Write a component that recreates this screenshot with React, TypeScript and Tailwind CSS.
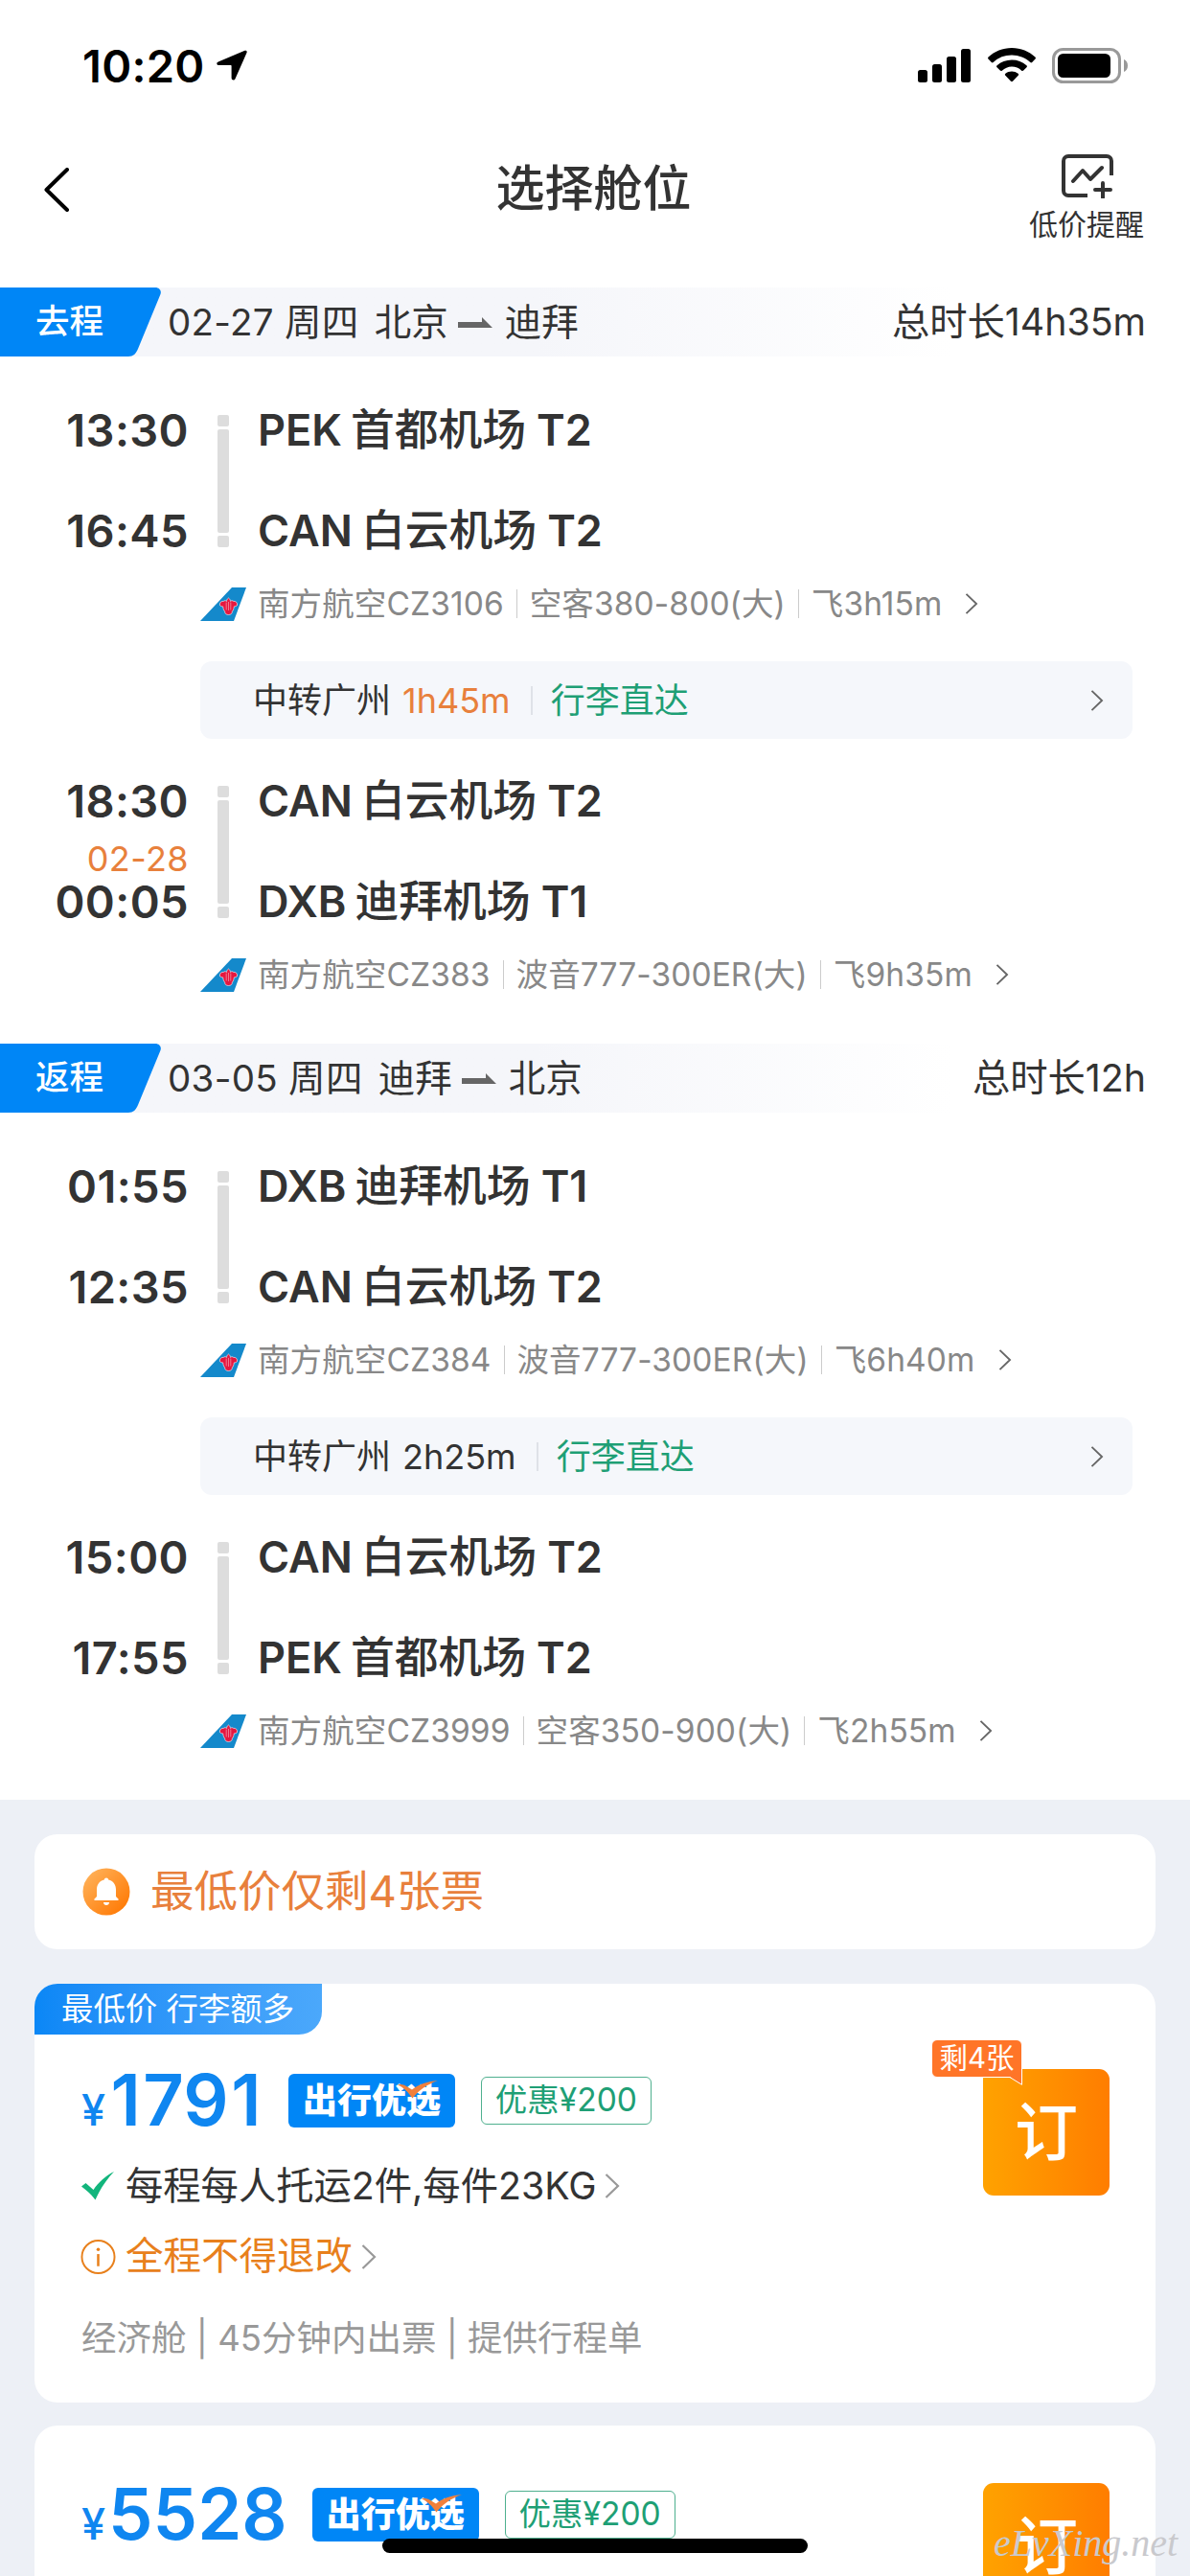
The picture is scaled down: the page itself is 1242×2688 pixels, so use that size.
import clsx from "clsx";

type Segment = {
  depart: { time: string; airport: string };
  arrive: { time: string; airport: string; date?: string };
  info: string[];
};

type Leg = {
  label: string;
  date: string;
  from: string;
  to: string;
  total: string;
  segments: Segment[];
  transfer: { city: string; wait: string; short: boolean; luggage: string };
};

const legs: Leg[] = [
  {
    label: "去程",
    date: "02-27 周四",
    from: "北京",
    to: "迪拜",
    total: "总时长14h35m",
    segments: [
      {
        depart: { time: "13:30", airport: "PEK 首都机场 T2" },
        arrive: { time: "16:45", airport: "CAN 白云机场 T2" },
        info: ["南方航空CZ3106", "空客380-800(大)", "飞3h15m"],
      },
      {
        depart: { time: "18:30", airport: "CAN 白云机场 T2" },
        arrive: { time: "00:05", airport: "DXB 迪拜机场 T1", date: "02-28" },
        info: ["南方航空CZ383", "波音777-300ER(大)", "飞9h35m"],
      },
    ],
    transfer: { city: "中转广州", wait: "1h45m", short: true, luggage: "行李直达" },
  },
  {
    label: "返程",
    date: "03-05 周四",
    from: "迪拜",
    to: "北京",
    total: "总时长12h",
    segments: [
      {
        depart: { time: "01:55", airport: "DXB 迪拜机场 T1" },
        arrive: { time: "12:35", airport: "CAN 白云机场 T2" },
        info: ["南方航空CZ384", "波音777-300ER(大)", "飞6h40m"],
      },
      {
        depart: { time: "15:00", airport: "CAN 白云机场 T2" },
        arrive: { time: "17:55", airport: "PEK 首都机场 T2" },
        info: ["南方航空CZ3999", "空客350-900(大)", "飞2h55m"],
      },
    ],
    transfer: { city: "中转广州", wait: "2h25m", short: false, luggage: "行李直达" },
  },
];

function Chevron({ className }: { className?: string }) {
  return (
    <svg viewBox="0 0 16 26" fill="none" stroke="currentColor" strokeWidth="2.2" className={clsx("shrink-0", className)}>
      <path d="M1.5 1 14 13 1.5 25" />
    </svg>
  );
}

function StatusBar() {
  return (
    <div className="flex h-[136px] items-center justify-between pl-[86px] pr-[64px] text-black">
      <div className="flex items-center">
        <span className="text-[47px] font-semibold leading-none tracking-[0.3px]">10:20</span>
        <svg viewBox="0 0 32 32" className="ml-3 size-8">
          <path d="M29.5.8 1.8 12.6C-.6 13.7.2 16 2.2 16H14.8c.6 0 .8.3.8.8v12.4c0 2.6 3 3 4 .7L31.5 3c.7-1.6-.5-2.8-2-2.2Z" />
        </svg>
      </div>
      <div className="flex items-center">
        <svg viewBox="0 0 56 35" className="h-[35px] w-14">
          <rect x="0" y="22" width="10" height="13" rx="2.5" />
          <rect x="15" y="16" width="10" height="19" rx="2.5" />
          <rect x="30" y="8" width="10" height="27" rx="2.5" />
          <rect x="45" y="0" width="10" height="35" rx="2.5" />
        </svg>
        <svg viewBox="0 0 50 36" className="ml-[17px] h-9 w-[50px]">
          <path d="M25 0C15.5 0 6.9 3.6.6 9.6c-.7.6-.7 1.4-.1 2l3.3 3.4c.6.6 1.3.6 1.9 0A28.3 28.3 0 0 1 25 7.6c7.4 0 14.2 2.8 19.3 7.4.6.6 1.3.6 1.9 0l3.3-3.4c.6-.6.6-1.4-.1-2C43.1 3.6 34.5 0 25 0Z" />
          <path d="M25 12.5c-5.9 0-11.3 2.2-15.4 5.8-.7.6-.7 1.4-.1 2l3.3 3.3c.6.6 1.3.6 2 .1A15.7 15.7 0 0 1 25 19.5c3.9 0 7.5 1.4 10.2 4.2.7.5 1.4.5 2-.1l3.3-3.3c.6-.6.6-1.4-.1-2A23.2 23.2 0 0 0 25 12.5Z" />
          <path d="M25 24.5c-2.5 0-4.8.9-6.6 2.3-.7.6-.7 1.3-.1 1.9l5.7 6c.6.6 1.4.6 2 0l5.7-6c.6-.6.6-1.3-.1-1.9a10.6 10.6 0 0 0-6.6-2.3Z" />
        </svg>
        <svg viewBox="0 0 80 37" className="ml-[17px] h-[37px] w-20">
          <rect x="1.5" y="1.5" width="69" height="34" rx="10" fill="none" stroke="#999" strokeWidth="3" />
          <rect x="6" y="6" width="55" height="25" rx="5.5" />
          <path d="M75 12c2.6 1 4 3.5 4 6.5S77.6 24 75 25Z" fill="#999" />
        </svg>
      </div>
    </div>
  );
}

function NavBar() {
  return (
    <div className="mb-[43px] grid h-[121px] grid-cols-[1fr_auto_1fr] items-center pl-[45px] pr-[48px]">
      <svg viewBox="0 0 28 46" fill="none" stroke="#000" strokeWidth="4" strokeLinecap="round" strokeLinejoin="round" className="mt-[2px] h-[46px] w-7">
        <path d="M25 2 3.5 23 25 44" />
      </svg>
      <h1 className="text-[51px] font-medium leading-none text-[#333]">选择舱位</h1>
      <div className="flex flex-col items-end pt-4">
        <svg viewBox="0 0 54 46" fill="none" stroke="#333" strokeWidth="4" strokeLinecap="round" strokeLinejoin="round" className="mr-[32px] h-[46px] w-[54px]">
          <path d="M52 22V7a5 5 0 0 0-5-5H7a5 5 0 0 0-5 5v31a5 5 0 0 0 5 5h20" strokeLinecap="butt" />
          <path d="m12 28 10-11 8 9 12-12M35 37h16M43 30v15" />
        </svg>
        <span className="mt-[12px] text-[30px] leading-[30px] text-[#333]">低价提醒</span>
      </div>
    </div>
  );
}

function LegHeader({ leg }: { leg: Leg }) {
  return (
    <div className="flex h-[72px] items-center bg-linear-to-r from-[#f5f6fa] from-45% to-white to-80% pr-[46px] text-[#333]">
      <div className="relative flex h-full w-[175px] items-center pl-[37px]">
        <svg viewBox="0 0 168 72" className="absolute left-0 top-0 h-[72px] w-[168px]">
          <path d="M0 0h162c4.500 0 7 3.500 5.300 7.500L144 64c-2 5-5 8-10 8H0Z" fill="#0086f6" />
        </svg>
        <span className="relative text-[35.5px] font-medium leading-none text-white">{leg.label}</span>
      </div>
      <span className="text-[38.5px] leading-none tracking-[0.3px]">{leg.date}</span>
      <span className="ml-[16px] text-[38.5px] leading-none">{leg.from}</span>
      <svg viewBox="0 0 36 11" className="ml-[10px] h-[11px] w-9">
        <path d="M0 5h25V0l11 11H0Z" fill="#666" />
      </svg>
      <span className="ml-[13px] text-[38.5px] leading-none">{leg.to}</span>
      <span className="ml-auto text-[39.3px] leading-none">{leg.total}</span>
    </div>
  );
}

function AirlineTail() {
  return (
    <svg viewBox="0 0 48 35" className="h-[35px] w-12">
      <path d="M33 0h15L35 35H0Z" fill="#1489cb" />
      <path
        d="M29.5 11c1.5 1 2 2.3 1.8 3.4 1.2-.9 2.6-.9 3.4 0 2.6-.3 4.3 1.5 3.8 4.3-1 .9-2 1.2-3.2 1.2-.2 2-.8 4-2 5.2.2 2-1.4 3.4-3.8 3.4s-4-1.4-3.8-3.4c-1.2-1.2-1.8-3.2-2-5.2-1.2 0-2.2-.3-3.2-1.2-.5-2.8 1.2-4.6 3.8-4.3.8-.9 2.2-.9 3.4 0-.2-1.1.3-2.4 1.8-3.4Z"
        fill="#e5173f"
        stroke="#fff"
        strokeOpacity=".6"
      />
      <path d="M27.2 15.5v8M29.5 15v9M31.8 15.5v8" stroke="#fff" strokeOpacity=".6" strokeWidth=".7" />
    </svg>
  );
}

function Airport({ name }: { name: string }) {
  const [code, title, terminal] = name.split(" ");
  return (
    <span className="flex items-center">
      <span>{code}</span>
      <span className="ml-[9px] text-[45.8px] font-medium">{title}</span>
      <span className="ml-[11px]">{terminal}</span>
    </span>
  );
}

function SegmentRow({ segment }: { segment: Segment }) {
  const { depart, arrive, info } = segment;
  return (
    <div>
      <div className="flex h-[165px] items-center text-[#333]">
        <div className="flex w-[197px] flex-col text-right text-[47px] font-semibold leading-[60px] tracking-[0.4px]">
          <span>{depart.time}</span>
          <span className="flex h-[45px] items-end justify-end text-[36px] font-normal leading-[30px] text-[#e8803c]">
            {arrive.date}
          </span>
          <span>{arrive.time}</span>
        </div>
        <div className="ml-[30px] flex w-3 flex-col gap-[3px]">
          <span className="h-3 rounded-[2px] bg-[#ddd]" />
          <span className="h-[108px] rounded-[2px] bg-[#ddd]" />
          <span className="h-3 rounded-[2px] bg-[#ddd]" />
        </div>
        <div className="ml-[30px] flex flex-col gap-[45px] text-[45px] font-semibold leading-[60px]">
          <Airport name={depart.airport} />
          <Airport name={arrive.airport} />
        </div>
      </div>
      <div className="mt-[26px] flex h-10 items-center pl-[209px] text-[33.5px] leading-none tracking-[0.1px] text-[#888]">
        <AirlineTail />
        {info.map((text, index) => (
          <span
            key={text}
            className={clsx("leading-[30px]", index === 0 ? "ml-[12px]" : "ml-[13px] border-l border-[#ccc] pl-[13px]")}
          >
            {text}
          </span>
        ))}
        <Chevron className="ml-[24px] h-[22px] w-[14px] text-[#666]" />
      </div>
    </div>
  );
}

function Transfer({ transfer }: { transfer: Leg["transfer"] }) {
  return (
    <div className="mb-[35px] ml-[209px] mr-[60px] mt-[40px] flex h-[81px] items-center rounded-xl bg-[#f5f7fb] pl-[55px] pr-[30px] text-[36px] leading-[30px] text-[#333]">
      <span>{transfer.city}</span>
      <span className={clsx("ml-[12px]", transfer.short && "text-[#e8803c]")}>{transfer.wait}</span>
      <span className="ml-[21px] border-l-2 border-[#dfe2e8] pl-[19px] text-[#1e9f75]">{transfer.luggage}</span>
      <Chevron className="ml-auto h-[22px] w-[14px] text-[#666]" />
    </div>
  );
}

function LegSection({ leg }: { leg: Leg }) {
  return (
    <section className="pb-[52px]">
      <LegHeader leg={leg} />
      <div className="pt-[47px]">
        <SegmentRow segment={leg.segments[0]} />
        <Transfer transfer={leg.transfer} />
        <SegmentRow segment={leg.segments[1]} />
      </div>
    </section>
  );
}

function LowStockNotice() {
  return (
    <div className="flex h-[120px] items-center rounded-[24px] bg-white pl-[50px]">
      <svg viewBox="0 0 50 50" className="size-[50px]">
        <defs>
          <linearGradient id="bell" x1="0" y1="0" x2="1" y2="1">
            <stop offset="0.1" stopColor="#ffb057" />
            <stop offset="0.9" stopColor="#ff7a05" />
          </linearGradient>
        </defs>
        <circle cx="25" cy="25" r="24.5" fill="url(#bell)" />
        <path
          d="M25 10.5c1.3 0 2 .8 2.2 2 4.8 1.2 7.8 5 7.8 10V30l2.5 2.6c.4.5.2 1.4-.6 1.4H13.1c-.8 0-1-.9-.6-1.4L15 30v-7.5c0-5 3-8.8 7.8-10 .2-1.2.9-2 2.2-2ZM22 36h6c0 2-1.3 3-3 3s-3-1-3-3Z"
          fill="#fff"
        />
      </svg>
      <span className="ml-[21px] text-[45.5px] leading-none text-[#e8803c]">最低价仅剩4张票</span>
    </div>
  );
}

function PriceRow({ price }: { price: string }) {
  return (
    <div className="flex h-[60px] items-center">
      <span className="flex items-baseline text-[#0f86f0]">
        <span className="text-[45px] font-medium leading-none">¥</span>
        <span className="ml-[3px] text-[74px] font-semibold leading-[60px]">
          {price.split("").map((digit, index) => (
            <span key={index} className={clsx(digit === "1" && "px-[2.5px]")}>
              {digit}
            </span>
          ))}
        </span>
      </span>
      <span className="relative ml-[26px] flex h-14 w-[174px] items-center justify-center rounded-md bg-[#0086f6] text-[36px] font-black leading-none text-white">
        出行优选
        <svg viewBox="0 0 42 19" className="absolute left-[114px] top-[7px] h-[19px] w-[42px]">
          <path d="M0 4.5c2-.8 5-.5 7.5.5L15 9.5C22 4 31 .8 42 0 31 4 22 10 15.5 18.5 11 12 6 7 0 4.5Z" fill="#f0803c" />
        </svg>
      </span>
      <span className="ml-[27px] flex h-[50px] w-[178px] items-center justify-center rounded-md border-[1.5px] border-[#4fb08f] text-[33.5px] leading-none text-[#1e9f75]">
        优惠¥200
      </span>
    </div>
  );
}

function BookButton({ left }: { left?: string }) {
  return (
    <div className="relative flex size-[132px] items-center justify-center rounded-[11px] bg-linear-to-r from-[#ffa200] to-[#ff7d00] text-[66px] font-medium leading-none text-white">
      订
      {left && (
        <div className="absolute left-[-54px] top-[-31px] flex h-[40px] w-[95px] items-center justify-center rounded-md rounded-br-none border border-white bg-[#ff7528] text-[29.5px] font-normal leading-none">
          {left}
          <svg viewBox="0 0 13 9" className="absolute -right-px top-[38px] h-[9px] w-[13px]">
            <path d="M0 0h12v8Z" fill="#ff7528" />
            <path d="M0 .6 12.5 8.3V0" fill="none" stroke="#fff" />
          </svg>
        </div>
      )}
    </div>
  );
}

function FareCard() {
  return (
    <div className="mt-9 h-[437px] rounded-[24px] bg-white">
      <span className="flex h-[53px] w-[300px] items-center rounded-br-[24px] rounded-tl-[24px] bg-linear-to-r from-[#0a87f6] to-[#4ba8fb] pl-[28px] text-[33.4px] leading-none text-white">
        最低价 行李额多
      </span>
      <div className="flex justify-between pl-[49px] pr-[48px] pt-[36px]">
        <div className="pt-[3px]">
          <PriceRow price="1791" />
          <div className="mt-[39px] flex h-[40px] items-center text-[39.3px] leading-none text-[#333]">
            <svg viewBox="0 0 35 30" className="mr-[11px] h-[30px] w-[35px]">
              <path d="M0 15.5 4.5 12l8 7C18 11 25 4.5 34 0 26 8.5 19.5 18 14.5 29.5 10.5 24 5.5 19.5 0 15.5Z" fill="#12b57c" />
            </svg>
            每程每人托运2件,每件23KG
            <Chevron className="ml-[8px] h-[26px] w-[16px] text-[#999]" />
          </div>
          <div className="mt-[34px] flex h-[40px] items-center text-[39.5px] leading-none text-[#e8801c]">
            <svg viewBox="0 0 38 38" fill="none" stroke="currentColor" strokeWidth="2" className="-ml-px mr-[10px] h-[38px] w-[37px]">
              <circle cx="19" cy="19" r="17.5" />
              <path d="M19 16v13" strokeWidth="2.6" />
              <circle cx="19" cy="11" r="1.8" fill="currentColor" stroke="none" />
            </svg>
            全程不得退改
            <Chevron className="ml-[9px] h-[26px] w-[16px] text-[#999]" />
          </div>
          <div className="mt-[45px] flex h-[40px] items-center text-[36.5px] leading-none text-[#999]">
            经济舱 | 45分钟内出票 | 提供行程单
          </div>
        </div>
        <BookButton left="剩4张" />
      </div>
    </div>
  );
}

export default function App() {
  return (
    <div className="relative h-[2688px] w-[1242px] overflow-hidden bg-[#edf0f6] font-['Inter','Noto_Sans_CJK_SC',sans-serif]">
      <div className="bg-white">
        <StatusBar />
        <NavBar />
        {legs.map((leg) => (
          <LegSection key={leg.label} leg={leg} />
        ))}
      </div>
      <div className="px-9 pt-9">
        <LowStockNotice />
        <FareCard />
        <div className="mt-6 flex h-[300px] justify-between rounded-[24px] bg-white pl-[49px] pr-[48px] pt-[60px]">
          <div className="pt-[3px]">
            <PriceRow price="5528" />
          </div>
          <BookButton />
        </div>
      </div>

      {/* home indicator */}
      <div className="absolute bottom-[24px] left-[399px] h-[15px] w-[444px] rounded-full bg-black" />
      <span className="absolute left-[1037px] top-[2632px] font-['Liberation_Serif',serif] text-[40px] italic leading-[44px] text-[#c9c9cd]">
        eLvXing.net
      </span>
    </div>
  );
}
